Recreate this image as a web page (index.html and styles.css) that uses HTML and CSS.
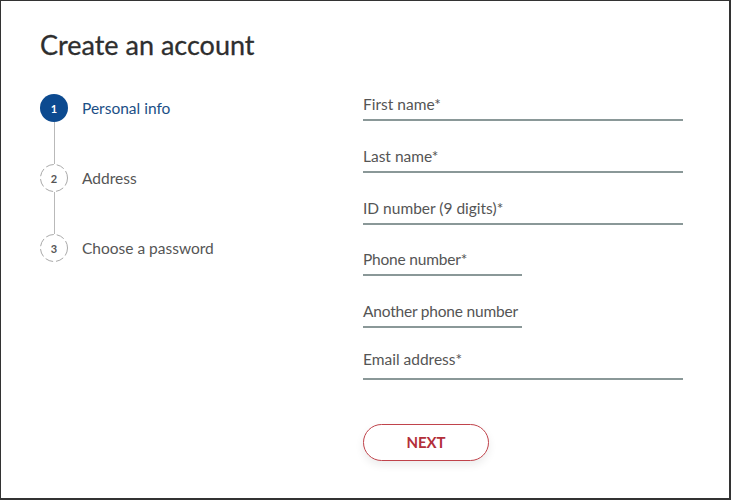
FILE: index.html
```html
<!DOCTYPE html>
<html lang="en">
<head>
<meta charset="utf-8">
<title>Create an account</title>
<link rel="stylesheet" href="styles.css">
</head>
<body>
<div class="frame">
  <h1 class="title">Create an account</h1>
  <div class="content">
    <ol class="steps">
      <li class="step active">
        <span class="dot">1</span>
        <span class="label">Personal info</span>
      </li>
      <li class="connector"></li>
      <li class="step">
        <span class="dot"><svg class="ring" width="28" height="28" viewBox="0 0 28 28"><circle cx="14" cy="14" r="13.5" fill="none" stroke="#a9a9a9" stroke-width="1" stroke-dasharray="8 3"/></svg>2</span>
        <span class="label">Address</span>
      </li>
      <li class="connector"></li>
      <li class="step">
        <span class="dot"><svg class="ring" width="28" height="28" viewBox="0 0 28 28"><circle cx="14" cy="14" r="13.5" fill="none" stroke="#a9a9a9" stroke-width="1" stroke-dasharray="8 3"/></svg>3</span>
        <span class="label">Choose a password</span>
      </li>
    </ol>
    <form class="form">
      <div class="field">First name*</div>
      <div class="field">Last name*</div>
      <div class="field">ID number (9 digits)*</div>
      <div class="field short">Phone number*</div>
      <div class="field short">Another phone number</div>
      <div class="field email">Email address*</div>
      <button type="button" class="next">NEXT</button>
    </form>
  </div>
</div>
</body>
</html>
```

FILE: styles.css
```css
* { box-sizing: border-box; }
html, body { margin: 0; padding: 0; background: #fff; }
body {
  font-family: "Lato", "Noto Sans", sans-serif;
  color: #555;
}
.frame {
  width: 731px;
  height: 500px;
  border-top: 1px solid #333;
  border-left: 1px solid #333;
  border-right: 2px solid #333;
  border-bottom: 2px solid #333;
  padding: 28px 0 0 39px;
}
.title {
  margin: 0;
  font-size: 27px;
  font-weight: 400;
  line-height: 32px;
  color: #2e2e2e;
  letter-spacing: 0;
  -webkit-text-stroke: 0.3px #2e2e2e;
}
.content {
  display: flex;
  margin-top: 31px;
}
.steps {
  list-style: none;
  margin: 0;
  padding: 2px 0 0 0;
  width: 323px;
}
.step {
  display: flex;
  align-items: center;
  height: 28px;
}
.dot {
  position: relative;
  width: 28px;
  height: 28px;
  border-radius: 50%;
  display: flex;
  align-items: center;
  justify-content: center;
  font-size: 11px;
  font-weight: 700;
  color: #555;
  flex: none;
}
.ring { position: absolute; left: 0; top: 0; }
.step.active .dot {
  background: #0c4a90;
  color: #fff;
}
.label {
  margin-left: 14px;
  font-size: 15.5px;
  color: #555;
  white-space: nowrap;
}
.step.active .label { color: #1b4f86; }
.connector {
  width: 1px;
  height: 42px;
  margin-left: 14px;
  background: #b9b9b9;
}
.form {
  display: flex;
  flex-direction: column;
  align-items: flex-start;
  gap: 22.8px;
  width: 320px;
}
.field {
  width: 320px;
  font-size: 15.5px;
  line-height: 24px;
  padding-bottom: 3px;
  border-bottom: 2px solid #8a9898;
  color: #555;
  white-space: nowrap;
}
.field.short { width: 159px; letter-spacing: -0.2px; }
.field.email {
  margin-top: -4px;
  padding-bottom: 7px;
}
.next {
  margin-top: 21px;
  width: 126px;
  height: 37px;
  border: 1px solid #c0434b;
  border-radius: 19px;
  background: #fff;
  color: #b32f3a;
  font-family: "Lato", "Noto Sans", sans-serif;
  font-weight: 700;
  font-size: 15px;
  box-shadow: 0 4px 8px rgba(0,0,0,0.08);
  padding: 0;
}
```
